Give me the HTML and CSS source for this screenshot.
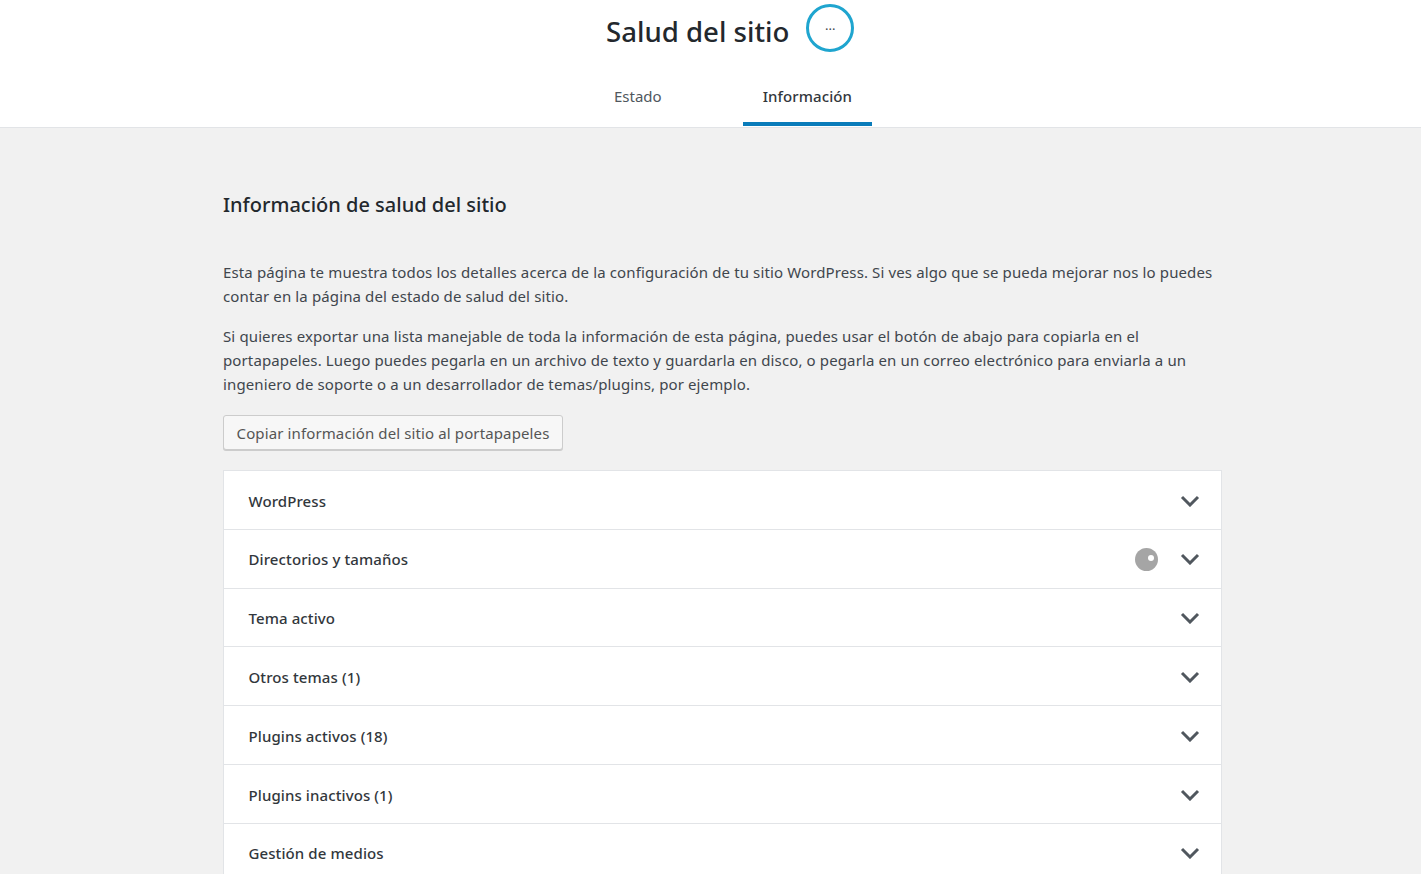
FILE: index.html
```html
<!DOCTYPE html>
<html lang="es">
<head>
<meta charset="utf-8">
<title>Salud del sitio</title>
<link rel="stylesheet" href="styles.css">
</head>
<body>
<header class="top">
  <div class="title-row">
    <h1 class="title">Salud del sitio</h1>
    <div class="progress"><span class="progress-label">...</span></div>
  </div>
  <nav class="tabs">
    <a class="tab">Estado</a>
    <a class="tab tab-active">Información</a>
  </nav>
</header>
<main class="content">
  <h2 class="heading">Información de salud del sitio</h2>
  <p class="para first">Esta página te muestra todos los detalles acerca de la configuración de tu sitio WordPress. Si ves algo que se pueda mejorar nos lo puedes contar en la página del estado de salud del sitio.</p>
  <p class="para">Si quieres exportar una lista manejable de toda la información de esta página, puedes usar el botón de abajo para copiarla en el portapapeles. Luego puedes pegarla en un archivo de texto y guardarla en disco, o pegarla en un correo electrónico para enviarla a un ingeniero de soporte o a un desarrollador de temas/plugins, por ejemplo.</p>
  <button class="copy">Copiar información del sitio al portapapeles</button>
  <section class="accordion">
    <div class="row"><span class="row-label">WordPress</span><svg class="chev" viewBox="0 0 20 12"><path d="M2 2l8 8 8-8"/></svg></div>
    <div class="row"><span class="row-label">Directorios y tamaños</span><span class="spinner"></span><svg class="chev" viewBox="0 0 20 12"><path d="M2 2l8 8 8-8"/></svg></div>
    <div class="row"><span class="row-label">Tema activo</span><svg class="chev" viewBox="0 0 20 12"><path d="M2 2l8 8 8-8"/></svg></div>
    <div class="row"><span class="row-label">Otros temas (1)</span><svg class="chev" viewBox="0 0 20 12"><path d="M2 2l8 8 8-8"/></svg></div>
    <div class="row"><span class="row-label">Plugins activos (18)</span><svg class="chev" viewBox="0 0 20 12"><path d="M2 2l8 8 8-8"/></svg></div>
    <div class="row"><span class="row-label">Plugins inactivos (1)</span><svg class="chev" viewBox="0 0 20 12"><path d="M2 2l8 8 8-8"/></svg></div>
    <div class="row"><span class="row-label">Gestión de medios</span><svg class="chev" viewBox="0 0 20 12"><path d="M2 2l8 8 8-8"/></svg></div>
  </section>
</main>
</body>
</html>
```
FILE: styles.css
```css
html, body {
  margin: 0;
  height: 874px;
  overflow: hidden;
}
body {
  background: #f1f1f1;
  color: #23282d;
  font-family: "Noto Sans", "Open Sans", sans-serif;
}
.top {
  background: #fff;
  border-bottom: 1px solid #e2e4e7;
  box-sizing: border-box;
  height: 128px;
}
.title-row {
  display: flex;
  align-items: center;
  height: 56px;
  padding-left: 606px;
  gap: 17px;
}
.title {
  margin: 0;
  font-size: 27.6px;
  font-weight: 500;
  line-height: 56px;
  padding-top: 3px;
  box-sizing: border-box;
  height: 56px;
}
.progress {
  width: 48px;
  height: 48px;
  box-sizing: border-box;
  border: 3px solid #1fa5cf;
  border-radius: 50%;
  display: flex;
  align-items: center;
  justify-content: center;
}
.progress-label {
  font-size: 13px;
  line-height: 13px;
  color: #40464d;
  margin-top: -6px;
}
.tabs {
  display: flex;
  height: 70px;
  padding-left: 594px;
  gap: 61px;
}
.tab {
  box-sizing: border-box;
  height: 70px;
  padding: 29px 20px 0;
  font-size: 15px;
  line-height: 22px;
  color: #50575e;
}
.tab-active {
  font-weight: 500;
  letter-spacing: 0.1px;
  border-bottom: 4px solid #0a7cba;
  color: #32373c;
}
.content {
  width: 999px;
  margin-left: 223px;
}
.heading {
  margin: 0;
  padding-top: 63px;
  font-size: 20px;
  font-weight: 500;
  line-height: 28px;
}
.para {
  margin: 16px 0 0;
  font-size: 15px;
  line-height: 24px;
  letter-spacing: 0.125px;
  color: #40464d;
}
.first {
  margin-top: 41px;
}
.copy {
  display: block;
  margin-top: 19px;
  width: 340px;
  height: 35px;
  padding: 0;
  background: #f7f7f7;
  border: 1px solid #ccc;
  border-radius: 3px;
  box-shadow: 0 1px 0 #ccc;
  color: #555;
  font-family: inherit;
  font-size: 15px;
  letter-spacing: 0.12px;
}
.accordion {
  margin-top: 20px;
  background: #fff;
  border: 1px solid #e2e4e7;
}
.row {
  display: flex;
  align-items: center;
  box-sizing: border-box;
  height: 58.8px;
  padding: 1.4px 21px 0 24.5px;
  border-bottom: 1px solid #e2e4e7;
  font-size: 15px;
  font-weight: 500;
  letter-spacing: 0.1px;
  color: #32373c;
}
.row-label {
  flex: 1;
}
.spinner {
  position: relative;
  width: 23px;
  height: 23px;
  margin-right: 22px;
  border-radius: 50%;
  background: #a5a5a5;
}
.spinner::after {
  content: "";
  position: absolute;
  top: 7px;
  right: 4px;
  width: 6px;
  height: 6px;
  border-radius: 50%;
  background: #fff;
}
.chev {
  width: 20px;
  height: 12px;
  fill: none;
  stroke: #50575e;
  stroke-width: 3;
}
```
